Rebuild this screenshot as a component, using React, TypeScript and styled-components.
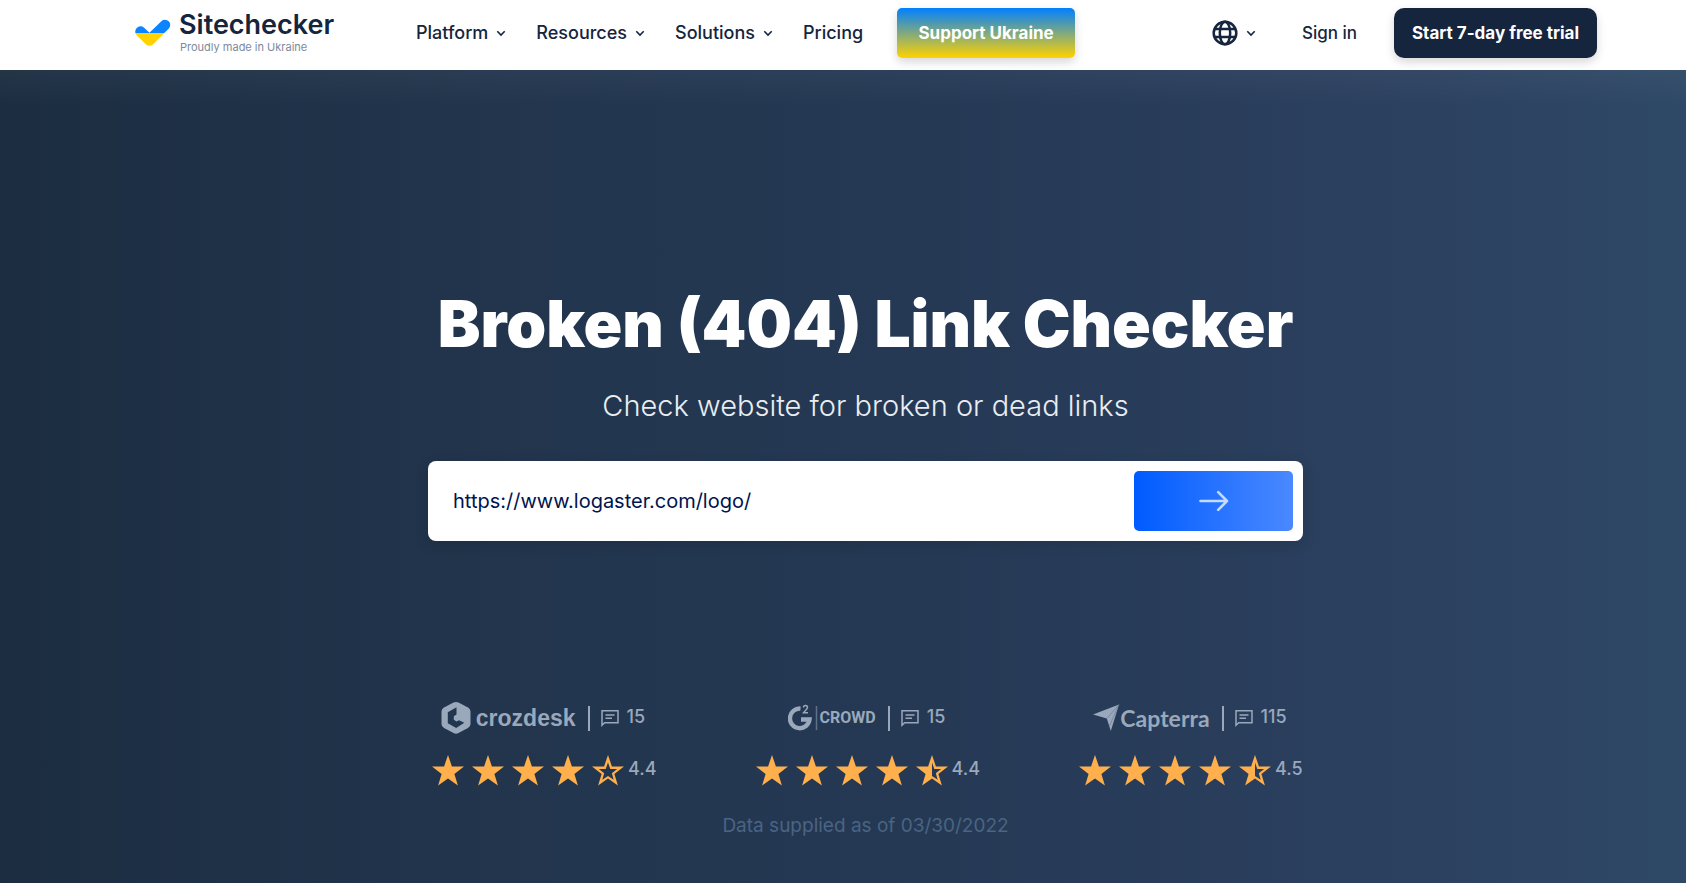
import React from "react";
import styled, { createGlobalStyle } from "styled-components";

const NAVY = "#15253e";
const MUTED = "#9aa8bb";
const ORANGE = "#ffaf4c";

const GlobalStyle = createGlobalStyle`
  * { box-sizing: border-box; }
  body {
    margin: 0;
    font-family: Inter, "Open Sans", sans-serif;
    color: ${NAVY};
    background: #23364f;
  }
  button, input { font-family: inherit; }
  a { color: inherit; text-decoration: none; }
`;

const Page = styled.div`
  min-height: 100vh;
  display: flex;
  flex-direction: column;
`;

const Header = styled.header`
  display: flex;
  align-items: center;
  padding: 8px 89px 12px 135px;
  background: #fff;
`;

const Brand = styled.a`
  display: flex;
  align-items: center;
  gap: 8px;
  width: 281px;
`;

const BrandText = styled.span`
  display: flex;
  flex-direction: column;
  padding-bottom: 2px;
`;

const BrandName = styled.span`
  font-size: 27px;
  font-weight: 600;
  line-height: 30px;
`;

const BrandNote = styled.span`
  padding-left: 1px;
  font-size: 11px;
  line-height: 14px;
  color: #7d899a;
`;

const Nav = styled.nav`
  display: flex;
  align-items: center;
  gap: 30px;
`;

const MenuButton = styled.button`
  display: flex;
  align-items: center;
  gap: 8px;
  padding: 0;
  border: 0;
  background: none;
  color: ${NAVY};
  font-size: 18px;
  font-weight: 500;
  line-height: 24px;
  cursor: pointer;
`;

const NavLink = styled.a`
  font-size: 18px;
  font-weight: 500;
  line-height: 24px;
`;

const PillLink = styled.a<{ $kind: "ukraine" | "trial" }>`
  display: flex;
  align-items: center;
  justify-content: center;
  height: 50px;
  width: ${(p) => (p.$kind === "ukraine" ? 178 : 203)}px;
  margin-left: ${(p) => (p.$kind === "ukraine" ? 34 : 37)}px;
  border-radius: ${(p) => (p.$kind === "ukraine" ? 5 : 10)}px;
  background: ${(p) =>
    p.$kind === "ukraine" ? "linear-gradient(#0080ff, #ffd200)" : NAVY};
  box-shadow: 0 4px 10px rgba(0, 0, 0, 0.16);
  color: #fff;
  font-size: 17px;
  font-weight: 700;
  white-space: nowrap;
`;

const Account = styled.div`
  display: flex;
  align-items: center;
  margin-left: auto;
`;

const SignIn = styled.a`
  margin-left: 46px;
  font-size: 17px;
  font-weight: 500;
`;

const Hero = styled.main`
  flex: 1;
  display: flex;
  flex-direction: column;
  align-items: center;
  padding: 212px 24px 40px 69px;
  background:
    linear-gradient(rgba(255, 255, 255, 0.04), rgba(255, 255, 255, 0) 36px),
    linear-gradient(90deg, #1c2d41 0%, #22354d 30%, #253955 55%, #2c4160 85%, #2e4966 100%);
`;

const Title = styled.h1`
  margin: 0;
  color: #fff;
  font-size: 64px;
  font-weight: 900;
  line-height: 84px;
  text-align: center;
`;

const Subtitle = styled.p`
  margin: 20px 0 35px;
  color: #e9edf1;
  font-size: 29px;
  font-weight: 300;
  line-height: 40px;
  text-align: center;
`;

const SearchForm = styled.form`
  display: flex;
  width: 100%;
  max-width: 875px;
  height: 80px;
  padding: 10px;
  border-radius: 8px;
  background: #fff;
  box-shadow: 0 4px 14px rgba(0, 0, 0, 0.12);
`;

const UrlInput = styled.input`
  flex: 1;
  min-width: 0;
  padding: 0 15px;
  border: 0;
  outline: 0;
  background: none;
  color: #001450;
  font-size: 20px;
`;

const SubmitButton = styled.button`
  display: flex;
  align-items: center;
  justify-content: center;
  width: 159px;
  border: 0;
  border-radius: 5px;
  background: linear-gradient(90deg, #005bff, #4a89ff);
  cursor: pointer;
`;

const Ratings = styled.section`
  display: flex;
  flex-wrap: wrap;
  justify-content: space-between;
  gap: 32px;
  width: 100%;
  max-width: 875px;
  margin-top: 158px;
`;

const Rating = styled.article`
  display: flex;
  flex-direction: column;
  align-items: center;
  gap: 14px;
`;

const Source = styled.div`
  display: flex;
  align-items: center;
  height: 38px;
  padding-left: 2px;
  color: ${MUTED};
`;

const SourceName = styled.span<{ $font: string; $size: number }>`
  font-family: ${(p) => p.$font}, sans-serif;
  font-size: ${(p) => p.$size}px;
  font-weight: 700;
  line-height: 28px;
`;

const Divider = styled.span`
  width: 2px;
  height: 25px;
  margin: 0 11px 0 12px;
  background: ${MUTED};
`;

const Count = styled.span`
  margin-left: 8px;
  padding-bottom: 2px;
  font-size: 18px;
  font-weight: 500;
  line-height: 24px;
`;

const Stars = styled.div`
  display: flex;
  align-items: center;
  height: 38px;
`;

const StarCell = styled.span`
  display: flex;
  justify-content: center;
  width: 40px;
`;

const Score = styled.span`
  width: 28px;
  padding-bottom: 2px;
  color: ${MUTED};
  font-size: 18px;
  font-weight: 500;
  line-height: 24px;
`;

const Supplied = styled.p`
  margin: 23px 0 0;
  color: #4a6483;
  font-size: 19px;
  line-height: 28px;
`;

const LogoMark = () => (
  <svg width="36" height="28" viewBox="0 0 36 28" aria-hidden="true">
    <defs>
      <clipPath id="logo-top"><rect width="36" height="14" /></clipPath>
      <clipPath id="logo-bottom"><rect y="14" width="36" height="14" /></clipPath>
    </defs>
    <g fill="none" strokeWidth="10.5" strokeLinecap="round" strokeLinejoin="round">
      <g clipPath="url(#logo-top)">
        <path d="M5.5 12.5 14.5 21 30 6" stroke="#0b84ff" />
      </g>
      <g clipPath="url(#logo-bottom)">
        <path d="M5.5 12.5 14.5 21.5 30 6" stroke="#ffd200" />
        <path d="M6 14h22l-13 11z" fill="#ffd200" />
      </g>
    </g>
  </svg>
);

const Chevron = () => (
  <svg width="10" height="7" viewBox="0 0 10 7" fill="none" stroke={NAVY} strokeWidth="1.6" aria-hidden="true">
    <path d="M1.3 1.2 5 5l3.7-3.8" />
  </svg>
);

const Globe = () => (
  <svg width="26" height="26" viewBox="0 0 26 26" fill="none" stroke={NAVY} strokeWidth="2.5" aria-hidden="true">
    <circle cx="13" cy="13" r="11.3" />
    <ellipse cx="13" cy="13" rx="5.2" ry="11.3" />
    <path d="M2.5 9h21M2.5 17h21" />
  </svg>
);

const Arrow = () => (
  <svg width="30" height="22" viewBox="0 0 30 22" fill="none" stroke="#c4dcff" strokeWidth="2.6" strokeLinecap="round" strokeLinejoin="round" aria-hidden="true">
    <path d="M1.5 11H28M19.2 2.2 28 11l-8.8 8.8" />
  </svg>
);

const Comment = () => (
  <svg width="18" height="18" viewBox="0 0 18 18" fill="none" stroke={MUTED} strokeWidth="1.5" aria-hidden="true">
    <path d="M1 16.2V1.8h16v12H3.6zM4.5 6h9M4.5 9.300h6.500" />
  </svg>
);

const STAR = "M16 0 19.9 11.4 32 11.6 22.4 18.9 25.900 30.500 16 23.600 6.100 30.500 9.600 18.900 0 11.600 12.100 11.400Z";
const STAR_HOLE = "M16 7.500 18.300 13.900 25.100 14.100 19.800 18.200 21.700 24.800 16 20.900 10.300 24.800 12.200 18.200 6.900 14.100 13.700 13.900Z";
const HALF_HOLE = "M16 7.500 18.300 13.900 25.100 14.100 19.800 18.200 21.700 24.800 16 20.900Z";

type Fill = "full" | "half" | "empty";

const Star = ({ fill }: { fill: Fill }) => (
  <svg width="32" height="31" viewBox="0 0 32 31" aria-hidden="true">
    <path
      fill={ORANGE}
      fillRule="evenodd"
      d={fill === "full" ? STAR : STAR + (fill === "half" ? HALF_HOLE : STAR_HOLE)}
    />
  </svg>
);

const CrozdeskMark = () => (
  <svg width="35" height="34" viewBox="0 0 35 34" aria-hidden="true">
    <path fill={MUTED} d="M12.500 1.600Q15 .4 17.500 1.600L27 6.500Q29.500 8 29.500 10.500V23Q29.500 25.500 27 27L17.500 32Q15 33.300 12.500 32L3 27Q.5 25.500.5 23V10.500Q.5 8 3 6.500Z" />
    <path fill="#23364f" d="M15.500 6.200V13.500L12.800 15.300V18.800L15.500 20.500 18 19.300 23.300 21.800 15.200 27 6.800 22.200V11.300Z" />
  </svg>
);

const G2Mark = () => (
  <svg width="32" height="28" viewBox="0 0 32 28" aria-hidden="true">
    <path d="M12.500 4.600A9.800 9.800 0 1 0 21.500 15.500H13" fill="none" stroke={MUTED} strokeWidth="4.400" />
    <path d="M15.500 3.500C15.600.8 19.500.7 19.500 3.300 19.500 5 17.500 6 15.500 8.800H20" fill="none" stroke={MUTED} strokeWidth="1.500" />
    <path d="M28.500 2v24" stroke={MUTED} strokeOpacity=".5" strokeWidth="1.500" />
  </svg>
);

const CapterraMark = () => (
  <svg width="27" height="28" viewBox="0 0 27 28" aria-hidden="true">
    <path fill={MUTED} d="M0 10.500 26 .5 17.800 27 13.800 14.500Z" />
    <path d="M26 .5 13.800 14.500M26 .5 16.500 22" stroke="#63758e" strokeWidth=".6" />
  </svg>
);

const ratings: {
  name: string;
  font: string;
  size: number;
  mark: React.ReactNode;
  reviews: number;
  score: string;
  last: Fill;
}[] = [
  { name: "crozdesk", font: '"Liberation Sans"', size: 23, mark: <CrozdeskMark />, reviews: 15, score: "4.4", last: "empty" },
  { name: "CROWD", font: "Roboto", size: 16, mark: <G2Mark />, reviews: 15, score: "4.4", last: "half" },
  { name: "Capterra", font: "Lato", size: 23, mark: <CapterraMark />, reviews: 115, score: "4.5", last: "half" },
];

const menus = ["Platform", "Resources", "Solutions"];

export default function App() {
  return (
    <Page>
      <GlobalStyle />
      <Header>
        <Brand href="#">
          <LogoMark />
          <BrandText>
            <BrandName>Sitechecker</BrandName>
            <BrandNote>Proudly made in Ukraine</BrandNote>
          </BrandText>
        </Brand>
        <Nav>
          {menus.map((label) => (
            <MenuButton key={label} type="button">
              {label}
              <Chevron />
            </MenuButton>
          ))}
          <NavLink href="#">Pricing</NavLink>
        </Nav>
        <PillLink $kind="ukraine" href="#">Support Ukraine</PillLink>
        <Account>
          <MenuButton type="button" aria-label="Language">
            <Globe />
            <Chevron />
          </MenuButton>
          <SignIn href="#">Sign in</SignIn>
          <PillLink $kind="trial" href="#">Start 7-day free trial</PillLink>
        </Account>
      </Header>
      <Hero>
        <Title>Broken (404) Link Checker</Title>
        <Subtitle>Check website for broken or dead links</Subtitle>
        <SearchForm onSubmit={(e) => e.preventDefault()}>
          <UrlInput type="text" aria-label="Website URL" defaultValue="https://www.logaster.com/logo/" />
          <SubmitButton type="submit" aria-label="Check">
            <Arrow />
          </SubmitButton>
        </SearchForm>
        <Ratings>
          {ratings.map((r) => (
            <Rating key={r.name}>
              <Source>
                {r.mark}
                <SourceName $font={r.font} $size={r.size}>{r.name}</SourceName>
                <Divider />
                <Comment />
                <Count>{r.reviews}</Count>
              </Source>
              <Stars>
                {[0, 1, 2, 3].map((i) => (
                  <StarCell key={i}><Star fill="full" /></StarCell>
                ))}
                <StarCell><Star fill={r.last} /></StarCell>
                <Score>{r.score}</Score>
              </Stars>
            </Rating>
          ))}
        </Ratings>
        <Supplied>Data supplied as of 03/30/2022</Supplied>
      </Hero>
    </Page>
  );
}
